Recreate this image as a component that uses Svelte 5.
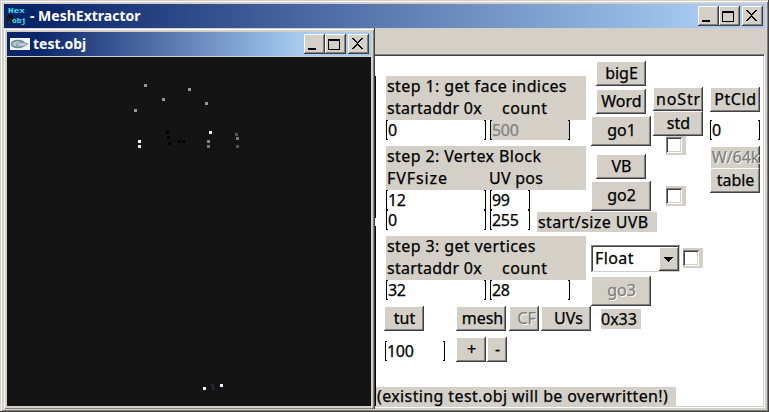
<script>
  const points = [
    [144, 84, '#969696'], [188, 88, '#969696'], [162, 98, '#969696'], [205, 102, '#969696'],
    [134, 109, '#969696'], [209, 131, '#f0f0f0'], [138, 140, '#f0f0f0'], [138, 145, '#e0e0e0'],
    [166, 131, '#000'], [167, 136, '#000'], [168, 142, '#000'], [178, 140, '#000'], [182, 140, '#000'],
    [235, 133, '#555'], [236, 137, '#777'], [207, 140, '#888'], [207, 145, '#777'], [236, 145, '#555'],
    [203, 387, '#f4f4f4'], [211, 384, '#26262c'], [212, 387, '#26262c'], [220, 384, '#f4f4f4']
  ];
</script>

{#snippet controls()}
  <div class="controls">
    <span class="cap"><svg width="21" height="20"><path d="M4 14h8v2H4z" /></svg></span>
    <span class="cap"><svg width="21" height="20"><path d="M3 5h12v11H3zM4 7v8h10V7z" fill-rule="evenodd" /></svg></span>
    <span class="cap close"><svg width="21" height="20"><path d="M4 4h2v1h1v1h1v1h1v1h1V7h1V6h1V5h1V4h2v1h-1v1h-1v1h-1v1h-1v1h-1v1h1v1h1v1h1v1h1v1h1v1h-2v-1h-1v-1h-1v-1h-1v-1H9v1H8v1H7v1H6v1H4v-1h1v-1h1v-1h1v-1h1v-1h1V9H8V8H7V7H6V6H5V5H4z" /></svg></span>
  </div>
{/snippet}

{#snippet field(value, width, off = false)}
  <div class="field" class:off style:width="{width}px"><i class="lb"></i><b>{value}</b><i class="rb"></i></div>
{/snippet}

<div class="app">
  <header class="title main">
    <svg class="logo" width="20" height="20">
      <rect y="9" width="6" height="8" fill="#111" />
      <text x="1" y="7" textLength="17" lengthAdjust="spacingAndGlyphs">Hex</text>
      <text x="0" y="17" textLength="5" class="dim">2</text>
      <text x="5" y="17" textLength="14" lengthAdjust="spacingAndGlyphs">obj</text>
    </svg>
    <span class="name">- MeshExtractor</span>
    {@render controls()}
  </header>
  <div class="toolbar"></div>

  <main>
    <div class="edge"><i></i><i></i></div>
    <div class="form">
      <div class="columns">
        <section class="steps">
          <div class="step">
            <p>step 1: get face indices</p>
            <p class="sub"><span class="c1">startaddr 0x</span><span class="count">count</span></p>
          </div>
          <div class="row">{@render field('0', 100)}{@render field('500', 80, true)}</div>
          <div class="step second">
            <p>step 2: Vertex Block</p>
            <p class="sub"><span class="c1 wide">FVFsize</span><span class="uv">UV pos</span></p>
          </div>
          <div class="row">{@render field('12', 100)}{@render field('99', 40)}</div>
          <div class="row">{@render field('0', 100)}{@render field('255', 40)}<span class="tag uvb">start/size UVB</span></div>
          <div class="step third">
            <p>step 3: get vertices</p>
            <p class="sub"><span class="c1">startaddr 0x</span><span class="count">count</span></p>
          </div>
          <div class="row">{@render field('32', 100)}{@render field('28', 80)}</div>
        </section>

        <section class="actions">
          <button class="mid bige">bigE</button>
          <button class="mid word">Word</button>
          <button class="big go1">go1</button>
          <button class="mid vb">VB</button>
          <button class="big go2">go2</button>
          <div class="combo"><span>Float</span><i><svg width="18" height="22"><path d="M5 10h9v1h-1v1h-1v1h-1v1h-1v1H9v-1H8v-1H7v-1H6v-1H5z" /></svg></i></div>
          <button class="big go3 dis">go3</button>
        </section>

        <section class="options">
          <button class="mid nostr">noStr</button>
          <button class="mid std">std</button>
          <div class="check k1"><i></i></div>
          <div class="check k2"><i></i></div>
          <div class="check k3"><i></i></div>
        </section>

        <section class="tables">
          <button class="mid ptcld">PtCld</button>
          <div class="pt">{@render field('0', 50)}</div>
          <button class="mid w64 dis">W/64k</button>
          <button class="mid">table</button>
        </section>
      </div>

      <div class="bar">
        <button class="tut">tut</button>
        <button class="mid mesh">mesh</button>
        <button class="cf dis">CF</button>
        <button class="mid uvs">UVs</button>
        <span class="tag hex">0x33</span>
      </div>
      <div class="bar scale">
        <div class="num">{@render field('100', 60)}</div>
        <button class="plus">+</button>
        <button class="minus">-</button>
      </div>
      <div class="note"><span>(existing test.obj will be overwritten!)</span></div>
    </div>
  </main>

  <div class="child">
    <header class="title">
      <svg class="thumb" width="20" height="12">
        <rect width="20" height="12" fill="#f4f4f4" />
        <ellipse cx="8" cy="6" rx="6.5" ry="3.5" fill="#b4c4cc" stroke="#5f8f96" stroke-width="1.5" />
        <path d="M6 7q4-4 12-1q-5 4-12 1" fill="#cdd5dc" stroke="#8094a4" />
      </svg>
      <span class="name">test.obj</span>
      {@render controls()}
    </header>
    <svg class="view" width="364" height="349" viewBox="7 57 364 349" shape-rendering="crispEdges">
      {#each points as [x, y, c]}
        <rect {x} {y} width="3" height="3" fill={c} />
      {/each}
    </svg>
  </div>
</div>

<style>
  .app, .app * { box-sizing: border-box; }
  .app {
    position: relative; width: 769px; height: 412px; overflow: hidden;
    background: #d4d0c8;
    border: solid; border-width: 0 1px 1px 0; border-color: #404040;
    box-shadow: inset 1px 1px #d4d0c8, inset 2px 2px #fff, inset -1px -1px #808080;
    padding: 4px 3px 0 4px;
    font: 400 16px/20px "Noto Sans", sans-serif; color: #000;
    -webkit-text-stroke: 0.25px;
  }
  p { margin: 0; height: 22px; display: flex; white-space: pre; letter-spacing: 0.39px; }
  .sub { letter-spacing: 0.25px; }
  .title {
    height: 24px; display: flex; align-items: center; color: #fff;
    background: linear-gradient(90deg, #0a246a 0, #0a246a 4%, #a6caf0 92%);
    font: bold 14px/24px "Noto Sans", sans-serif; -webkit-text-stroke: 0;
  }
  .main { width: 761px; }
  .logo { margin-left: 3px; flex: none; }
  .logo text { font: bold 8px "Liberation Mono", monospace; fill: #40e8f0; }
  .logo .dim { fill: #334; }
  .main .name { margin-left: 3px; }
  .name { white-space: nowrap; }
  .controls { display: flex; margin: 0 2px 0 auto; }
  .cap {
    width: 21px; height: 20px; background: #d4d0c8; overflow: hidden;
    box-shadow: inset -1px -1px #404040, inset 1px 1px #fff, inset -2px -2px #808080;
  }
  .cap svg { display: block; }
  .close { margin-left: 2px; }
  .toolbar { height: 26px; width: 761px; }
  main {
    display: flex; width: 761px; height: 354px; background: #fff;
    padding-left: 371px; border-top: 1px solid #808080; border-right: 1px solid #fff; border-bottom: 1px solid #fff;
    box-shadow: inset 0 1px #404040, inset -1px -1px #d4d0c8;
  }
  .edge { width: 1px; padding-top: 21px; flex: none; }
  .edge i { display: block; height: 142px; background: #000; }
  .edge i + i { margin-top: 8px; height: 180px; }
  .form { flex: 1; padding-top: 1px; min-width: 0; }
  .columns { display: flex; height: 250px; padding-left: 10px; }
  .steps { width: 205px; padding-top: 20px; flex: none; }
  .step { width: 200px; height: 44px; background: #d4d0c8; padding-left: 1px; }
  .second, .third { margin-top: 6px; }
  .count { margin-left: 18px; letter-spacing: 0.5px; }
  .c1 { width: 97px; flex: none; }
  .wide { letter-spacing: 0.9px; }
  .uv { margin-left: 5px; }
  .row { display: flex; gap: 4px; height: 20px; }
  .field { display: flex; height: 20px; line-height: 20px; flex: none; background: #fff; }
  .field b { flex: 1; font-weight: 400; letter-spacing: -0.3px; }
  .field i { width: 2px; border: 1px solid #000; }
  .field .lb { border-right: 0; }
  .field .rb { border-left: 0; }
  .off { background: #d4d0c8; color: #808080; }
  .tag { background: #d4d0c8; height: 20px; line-height: 20px; white-space: nowrap; flex: none; }
  .uvb { width: 120px; margin: 2px 0 0 3px; padding-left: 1px; letter-spacing: 0.4px; }
  .hex { width: 40px; margin: 3px 0 0 10px; }
  button {
    display: flex; justify-content: center; align-items: center; flex: none;
    font: inherit; line-height: 20px; color: #000; margin: 0; padding: 0 0 2px 1px; border: 0; height: 25px; white-space: nowrap;
    background: #d4d0c8; border-radius: 0; -webkit-text-stroke: inherit;
    box-shadow: inset -1px -1px #404040, inset 1px 1px #fff, inset -2px -2px #808080;
  }
  .mid { width: 50px; }
  .big { width: 60px; height: 30px; }
  .dis { color: #808080; text-shadow: 1px 1px #fff; }
  .actions { width: 62px; flex: none; padding-top: 5px; }
  .actions .mid { margin-left: 5px; }
  .word { margin-top: 3px; }
  .go1, .go2 { margin-top: 2px; }
  .vb { margin-top: 8px; }
  .combo {
    width: 89px; height: 27px; margin-top: 34px; display: flex; padding: 2px 1px 1px 4px; line-height: 23px; background: #fff;
    letter-spacing: 0.4px;
    box-shadow: inset 1px 1px #808080, inset -1px -1px #d4d0c8, inset 2px 2px #404040;
  }
  .combo span { flex: 1; }
  .combo i { width: 20px; background: #d4d0c8; box-shadow: inset -1px -1px #404040, inset 1px 1px #fff, inset -2px -2px #808080; }
  .combo svg { display: block; }
  .go3 { margin-top: 4px; }
  .options { width: 57px; flex: none; padding-top: 31px; }
  .nostr { height: 24px; letter-spacing: 0.9px; padding-bottom: 0; }
  .ptcld { letter-spacing: 0.6px; }
  .check { width: 20px; height: 20px; background: #d4d0c8; padding-top: 2px; }
  .check i {
    display: block; width: 16px; height: 16px; background: #fff;
    box-shadow: inset 1px 1px #808080, inset -1px -1px #fff, inset 2px 2px #404040, inset -2px -2px #d4d0c8;
  }
  .k1 { margin: 0 0 0 13px; height: 19px; padding-top: 1px; }
  .k2 { margin: 31px 0 0 13px; }
  .k3 { margin: 42px 0 0 30px; }
  .tables { padding-top: 31px; flex: none; }
  .pt { margin: 8px 0 6px; }
  .w64 { height: 22px; padding-bottom: 0; box-shadow: inset -1px 0 #404040, inset 1px 1px #fff, inset -2px 0 #808080; }
  .bar { display: flex; padding-left: 8px; height: 31px; }
  .tut { width: 40px; }
  .mesh { margin-left: 32px; padding-left: 3px; }
  .cf { width: 30px; margin-left: 3px; padding-left: 5px; }
  .uvs { margin-left: 2px; padding-left: 5px; }
  .num { margin: 4px 11px 0 1px; }
  .plus { width: 30px; margin-right: 1px; }
  .minus { width: 20px; }
  .note {
    margin-top: 19px; width: 300px; height: 19px; line-height: 19px; padding-left: 1px;
    background: #d4d0c8; white-space: nowrap; letter-spacing: 0.38px;
  }
  .child {
    position: absolute; left: 3px; top: 28px; width: 372px; height: 381px; padding: 4px 3px 0 4px; background: #d4d0c8;
    border-right: 1px solid #404040;
    box-shadow: inset 1px 1px #d4d0c8, inset 2px 2px #fff, inset -1px -1px #808080;
  }
  .child .title { background: linear-gradient(90deg, #0a246a 0, #0a246a 8%, #a6caf0 80%); }
  .thumb { margin: 0 3px; flex: none; }
  .view { display: block; margin-top: 1px; background: #141414; }
</style>
